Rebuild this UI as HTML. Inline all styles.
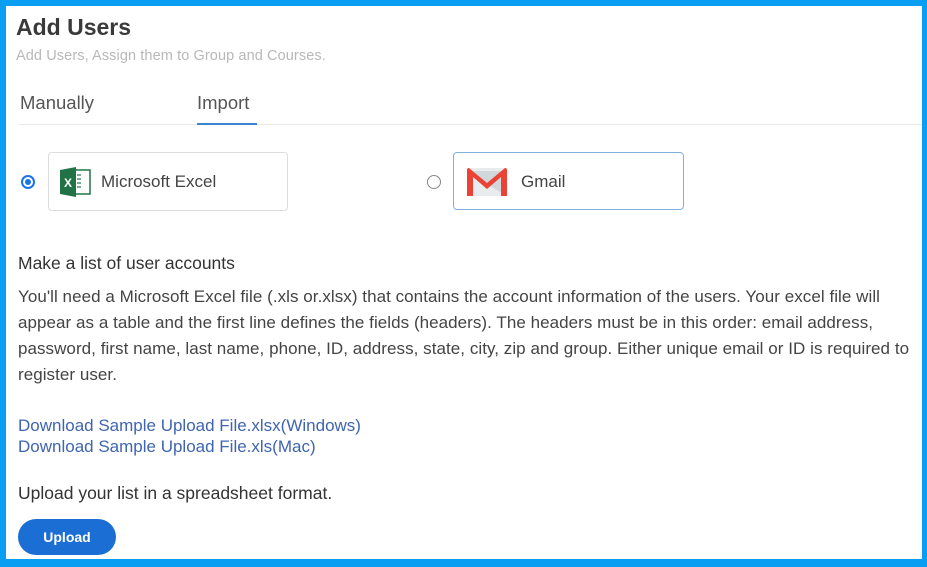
<!DOCTYPE html>
<html><head><meta charset="utf-8"><style>
*{margin:0;padding:0;box-sizing:border-box}
html,body{width:927px;height:567px;overflow:hidden;background:#0a9ef2}
body{font-family:"Liberation Sans",sans-serif;position:relative}
.page{position:absolute;left:6px;top:6px;width:916px;height:553px;background:#fff}
.abs{position:absolute;white-space:nowrap}
h1{position:absolute;left:10px;top:8px;font-size:23px;font-weight:bold;color:#3a3a3a}
.sub{left:10px;top:42px;font-size:14.5px;color:#b8b8b8;letter-spacing:0.1px}
.tab{top:86px;font-size:18.5px;color:#555}
.line{left:13px;top:118px;width:903px;height:1px;background:#e8e8e8}
.ul{left:191px;top:117px;width:60px;height:2px;background:#3a86d0}
.card{background:#fff;border:1px solid #ddd;border-radius:4px}
.radio{width:14px;height:14px;border-radius:50%}
.txt{font-size:17px;color:#444;line-height:26px;letter-spacing:0.05px}
a{color:#3f64b0;text-decoration:none}
.btn{left:12px;top:513px;width:98px;height:36px;border-radius:18px;background:#1b6fd4;color:#fff;font-weight:bold;font-size:14px;text-align:center;line-height:36px}
</style></head><body><div class="page">
<h1>Add Users</h1>
<div class="abs sub">Add Users, Assign them to Group and Courses.</div>
<div class="abs tab" style="left:14px">Manually</div>
<div class="abs tab" style="left:191px">Import</div>
<div class="abs line"></div><div class="abs ul"></div>

<div class="abs radio" style="left:15px;top:169px;border:2px solid #1a73e8;padding:2px"><div style="width:6px;height:6px;border-radius:50%;background:#1a73e8"></div></div>
<div class="abs card" style="left:42px;top:146px;width:240px;height:59px"></div>
<svg class="abs" style="left:53px;top:161px" width="34" height="30" viewBox="0 0 34 30"><rect x="13" y="3" width="18" height="24" fill="#fff" stroke="#217346" stroke-width="1.5"/><g stroke="#217346" stroke-width="1.2"><line x1="18" y1="8" x2="22" y2="8"/><line x1="18" y1="12" x2="22" y2="12"/><line x1="18" y1="16" x2="22" y2="16"/><line x1="18" y1="20" x2="22" y2="20"/></g><path d="M1 3 L17 0 L17 30 L1 27Z" fill="#217346"/><text x="9" y="20" font-family="Liberation Sans" font-weight="bold" font-size="12" fill="#fff" text-anchor="middle">X</text></svg>
<div class="abs" style="left:95px;top:166px;font-size:17px;color:#444">Microsoft Excel</div>

<div class="abs radio" style="left:421px;top:169px;border:1.5px solid #888"></div>
<div class="abs card" style="left:447px;top:146px;width:231px;height:58px;border-color:#7fb0df"></div>
<svg class="abs" style="left:460px;top:161px" width="42" height="30" viewBox="0 0 42 30"><rect x="1" y="1" width="40" height="28" rx="2" fill="#e8ecee"/><path d="M7 4 L21 17 L41 29 L41 4Z" fill="#d1d8db"/><path d="M1 3 Q1 1 3 1 L21 16 L39 1 Q41 1 41 3 L41 29 L35 29 L35 10 L21 22 L7 10 L7 29 L1 29Z" fill="#ea4335"/></svg>
<div class="abs" style="left:515px;top:166px;font-size:17px;color:#444">Gmail</div>

<div class="abs" style="left:12px;top:247px;font-size:17.5px;color:#333">Make a list of user accounts</div>
<div class="abs txt" style="left:12px;top:278px">You'll need a Microsoft Excel file (.xls or.xlsx) that contains the account information of the users. Your excel file will<br>appear as a table and the first line defines the fields (headers). The headers must be in this order: email address,<br>password, first name, last name, phone, ID, address, state, city, zip and group. Either unique email or ID is required to<br>register user.</div>
<div class="abs" style="left:12px;top:409px;font-size:17px;line-height:21px"><a>Download Sample Upload File.xlsx(Windows)</a><br><a>Download Sample Upload File.xls(Mac)</a></div>
<div class="abs" style="left:12px;top:477px;font-size:17.5px;color:#333">Upload your list in a spreadsheet format.</div>
<div class="abs btn">Upload</div>
</div></body></html>
